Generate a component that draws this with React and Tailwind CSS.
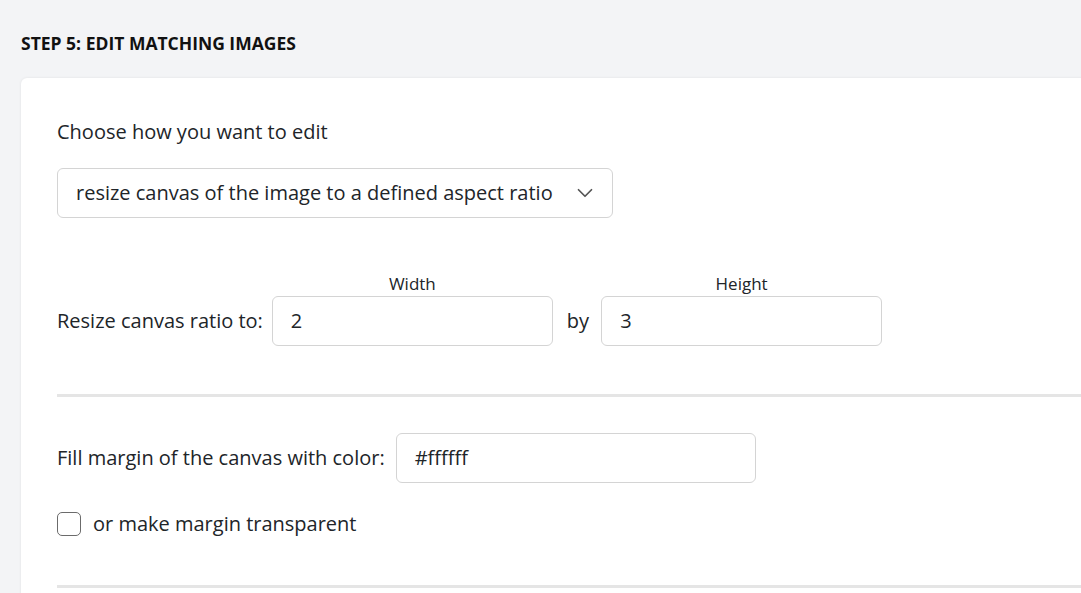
import React from 'react';
import { ChevronDown } from 'lucide-react';

export default function App() {
  return (
    <div className="w-[1081px] h-[593px] overflow-hidden bg-[#f3f4f6] text-[#212529] font-['Open_Sans',sans-serif]">
      <div className="pl-[21px] pt-[33px]">
        <h2 className="text-[17.5px] font-bold leading-[20px] text-[#111]">STEP 5: EDIT MATCHING IMAGES</h2>
        <div className="mt-[25px] w-[1120px] bg-white rounded-md shadow-[0_0_3px_rgba(0,0,0,0.08)] pl-[36px] pt-[42px] pb-10">
          <p className="text-[20px] leading-6">Choose how you want to edit</p>
          <div className="mt-[24px] w-[556px] h-[50px] border border-[#d4d4d4] rounded-md flex items-center justify-between pl-[18px] pr-[14px]">
            <span className="text-[20px]">resize canvas of the image to a defined aspect ratio</span>
            <ChevronDown size={26} strokeWidth={1.6} className="text-[#555]" />
          </div>

          <div className="mt-[56px] flex items-end">
            <span className="text-[20px] h-[50px] flex items-center mr-[9px]">Resize canvas ratio to:</span>
            <div className="flex flex-col items-center">
              <span className="text-[17px] leading-5 mb-[2px]">Width</span>
              <div className="w-[281px] h-[50px] border border-[#d4d4d4] rounded-md flex items-center pl-[18px] text-[20px]">2</div>
            </div>
            <span className="text-[20px] h-[50px] flex items-center ml-[14px] mr-[12px]">by</span>
            <div className="flex flex-col items-center">
              <span className="text-[17px] leading-5 mb-[2px]">Height</span>
              <div className="w-[281px] h-[50px] border border-[#d4d4d4] rounded-md flex items-center pl-[18px] text-[20px]">3</div>
            </div>
          </div>

          <div className="mt-[48px] h-[3px] bg-[#e5e5e5]" />

          <div className="mt-[36px] flex items-center">
            <span className="text-[20px] mr-[11px]">Fill margin of the canvas with color:</span>
            <div className="w-[360px] h-[50px] border border-[#d4d4d4] rounded-md flex items-center pl-[18px] text-[20px]">#ffffff</div>
          </div>

          <div className="mt-[26px] flex items-center">
            <span className="w-[24px] h-[24px] border border-[#6b6b6b] rounded-[5px] mr-[12px]" />
            <span className="text-[20px]">or make margin transparent</span>
          </div>

          <div className="mt-[46px] h-[3px] bg-[#e5e5e5]" />
        </div>
      </div>
    </div>
  );
}
